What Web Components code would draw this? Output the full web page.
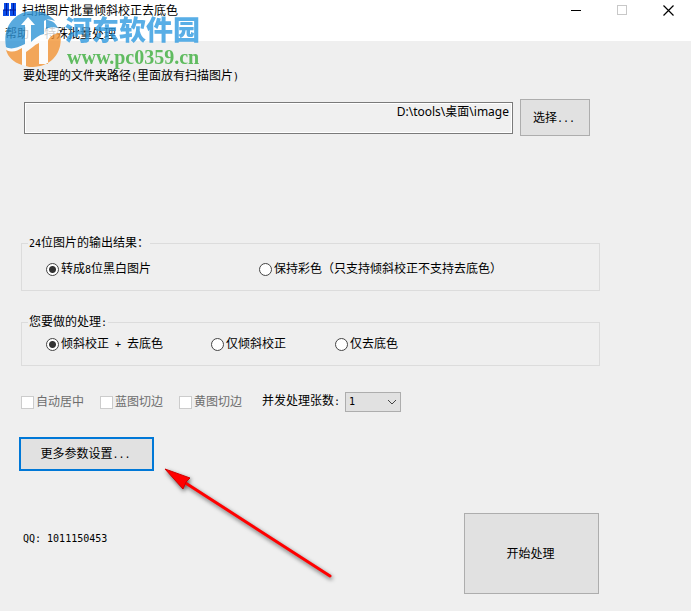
<!DOCTYPE html>
<html lang="zh-CN">
<head>
<meta charset="utf-8">
<title>扫描图片批量倾斜校正去底色</title>
<style>
  body {
    margin: 0;
    min-height: 100vh;
    background: #efefef;
    color: #000;
    font: 12px/16px "Liberation Mono", "Noto Sans CJK SC", monospace;
  }
</style>
</head>
<body>
<scan-app></scan-app>

<script>
class TitleBar extends HTMLElement {
  constructor() {
    super();
    this.attachShadow({ mode: 'open' });
    this.shadowRoot.innerHTML = `
      <style>
        :host {
          display: flex;
          align-items: center;
          height: 20px;
          padding-left: 3px;
          background: #fff;
          font-family: "Noto Sans CJK SC", sans-serif;
        }
        h1 { flex: 1; margin: 0 0 0 6px; font-size: 12px; font-weight: 400; }
        button {
          width: 46px;
          height: 20px;
          padding: 0;
          border: 0;
          background: none;
        }
        button svg { display: block; margin: auto; }
      </style>
      <svg width="13" height="14" viewBox="0 0 13 14">
        <path d="M1 0h5v13H0V7h1zM8 0h5v13H7V6h1z" fill="#0b4de8"/>
        <path d="M3.500 0v12M0 7h13M10.500 0v12" stroke="#001a9e"/>
      </svg>
      <h1><slot></slot></h1>
      <button aria-label="最小化"><svg width="11" height="11"><path d="M0 5.500h10" stroke="#000"/></svg></button>
      <button aria-label="最大化" disabled><svg width="11" height="11"><rect x=".5" y=".5" width="9" height="9" fill="none" stroke="#c8c8c8"/></svg></button>
      <button aria-label="关闭"><svg width="11" height="11"><path d="M.5.5l10 10M10.500.5l-10 10" stroke="#000" stroke-width="1.200"/></svg></button>
    `;
  }
}

class MenuBar extends HTMLElement {
  constructor() {
    super();
    this.attachShadow({ mode: 'open' });
    this.shadowRoot.innerHTML = `
      <style>
        :host {
          display: flex;
          align-items: center;
          gap: 15px;
          height: 21px;
          padding: 0 5px;
          background: #fff;
          font-family: "Noto Sans CJK SC", sans-serif;
        }
        button { padding: 4px 0 0; border: 0; background: none; font: inherit; }
      </style>
      <button>帮助</button>
      <button>特殊批量处理</button>
    `;
  }
}

class PushButton extends HTMLElement {
  constructor() {
    super();
    this.attachShadow({ mode: 'open' });
    this.shadowRoot.innerHTML = `
      <style>
        :host { display: inline-flex; }
        button {
          flex: 1;
          box-sizing: border-box;
          padding: 2px 2px 0 0;
          border: 1px solid #adadad;
          background: #e1e1e1;
          color: inherit;
          font: inherit;
        }
        :host([primary]) button { border: 2px solid #0078d7; }
      </style>
      <button><slot></slot></button>
    `;
  }
}

class GroupBox extends HTMLElement {
  constructor() {
    super();
    this.attachShadow({ mode: 'open' });
    this.shadowRoot.innerHTML = `
      <style>
        :host { display: block; }
        fieldset {
          min-width: 0;
          margin: 0;
          padding: var(--group-padding, 8px) 0 12px 24px;
          border: 1px solid #dcdcdc;
        }
        legend { margin-left: -18px; padding: 2px 1px 0; }
        div { display: flex; align-items: center; }
      </style>
      <fieldset>
        <legend><slot name="label"></slot></legend>
        <div><slot></slot></div>
      </fieldset>
    `;
  }
}

// Radio button or tick box with its label
class CheckItem extends HTMLElement {
  constructor() {
    super();
    this.attachShadow({ mode: 'open' });
    const type = this.getAttribute('type');
    this.shadowRoot.innerHTML = `
      <style>
        :host { display: block; white-space: nowrap; }
        label { display: flex; align-items: center; gap: 2px; }
        input {
          appearance: none;
          flex: none;
          box-sizing: border-box;
          width: 13px;
          height: 13px;
          margin: 0;
          border: 1px solid #444;
          background: #fff;
        }
        input[type=radio] { border-radius: 50%; }
        input[type=radio]:checked { background: radial-gradient(circle, #333 3px, #fff 4px); }
        input:disabled { border-color: #ccc; }
        input:disabled + span { color: #6d6d6d; }
        span { padding-top: 2px; }
      </style>
      <label>
        <input type="${type}" ${this.hasAttribute('checked') ? 'checked' : ''} ${this.hasAttribute('disabled') ? 'disabled' : ''}>
        <span><slot></slot></span>
      </label>
    `;
  }
}

class SiteMark extends HTMLElement {
  constructor() {
    super();
    this.attachShadow({ mode: 'open' });
    this.shadowRoot.innerHTML = `
      <style>
        :host {
          position: absolute;
          left: 5px;
          top: 11px;
          display: flex;
          gap: 4px;
          opacity: .8;
          pointer-events: none;
        }
        .words { display: flex; flex-direction: column; }
        b { white-space: nowrap; }
        .name {
          color: #2f9ae0;
          font: 900 27px/36px "Noto Sans CJK SC", sans-serif;
        }
        .site {
          padding-left: 2px;
          color: #3daf3d;
          font: 700 20px/20px "Liberation Serif", serif;
        }
      </style>
      <svg width="56" height="57" viewBox="0 0 56 57">
        <circle cx="28" cy="28" r="28" fill="#fff"/>
        <path d="M1 36C-3 15 11 0 28 0c9 0 17 4 22 10-4-2-8-2-11 0v13c-5 1-9 4-13 8V14h4l-7-8-7 8h4v19C12 37 6 39 1 36z" fill="#3095d6"/>
        <path d="M55 22c4 18-8 34-27 34-3 0-5 0-7-1V41c5-3 8-7 13-9v21h9V30c0-3 7-9 12-8z" fill="#f39535"/>
        <path d="M1 39c7 3 11 1 16-2v17C8 51 3 46 1 39z" fill="#f39535"/>
        <path d="M41 9c5 0 9 2 12 8-3-1-8-1-12 1z" fill="#3095d6"/>
      </svg>
      <span class="words">
        <b class="name">河东软件园</b>
        <b class="site">www.pc0359.cn</b>
      </span>
    `;
  }
}

class PointerArrow extends HTMLElement {
  constructor() {
    super();
    this.attachShadow({ mode: 'open' });
    this.shadowRoot.innerHTML = `
      <style>
        :host { position: absolute; left: 160px; top: 464px; pointer-events: none; }
        svg { display: block; filter: drop-shadow(1px 2px 2px rgba(0, 0, 0, .6)); }
      </style>
      <svg width="180" height="120" viewBox="0 0 180 120">
        <path d="M24 18L170 112" stroke="#f00" stroke-width="3" stroke-linecap="round"/>
        <path d="M5 5l25 9-4 4-3 7z" fill="#f00" stroke="#d00000"/>
      </svg>
    `;
  }
}

class ScanApp extends HTMLElement {
  constructor() {
    super();
    this.attachShadow({ mode: 'open' });
    this.shadowRoot.innerHTML = `
      <style>
        :host { display: block; position: relative; }
        main { display: flex; flex-direction: column; padding: 28px 91px 18px 21px; }
        small { font: 10px/10px "DejaVu Sans Mono", monospace; }
        .path-label { padding-left: 2px; }
        .path { display: flex; align-items: center; gap: 7px; margin: 14px 10px 0 3px; }
        .path input {
          flex: 1;
          min-width: 0;
          box-sizing: border-box;
          height: 32px;
          padding: 0 3px 14px;
          border: 1px solid #7a7a7a;
          outline: 1px solid #fff;
          outline-offset: -2px;
          background: #f0f0f0;
          font: 12px/16px "Noto Sans", "Noto Sans CJK SC", sans-serif;
          text-align: right;
        }
        .path push-button { width: 70px; height: 37px; }
        .output { margin-top: 98px; }
        .process { --group-padding: 4px; margin-top: 22px; }
        .output check-item:first-of-type { width: 213px; }
        .process check-item:first-of-type { width: 165px; }
        .process check-item:nth-of-type(2) { width: 124px; }
        .options { display: flex; align-items: center; margin-top: 26px; white-space: nowrap; }
        .options check-item { margin-right: 16px; }
        .options label { margin: 0 5px 0 4px; }
        .select { display: flex; position: relative; }
        select {
          appearance: none;
          width: 56px;
          height: 20px;
          padding: 0 3px;
          border: 1px solid #adadad;
          border-radius: 0;
          background: #e1e1e1;
          font: 10px/16px "DejaVu Sans Mono", monospace;
        }
        .select svg { position: absolute; right: 4px; top: 7px; pointer-events: none; }
        .more { align-self: flex-start; width: 135px; height: 34px; margin: 25px 0 0 -2px; }
        .contact { margin: 60px 0 0 2px; font: 10px/16px "DejaVu Sans Mono", monospace; }
        .start { align-self: flex-end; width: 135px; height: 81px; margin: -34px 1px 0 0; }
      </style>
      <title-bar>扫描图片批量倾斜校正去底色</title-bar>
      <menu-bar></menu-bar>
      <main>
        <label class="path-label" for="path">要处理的文件夹路径<small>(</small>里面放有扫描图片<small>)</small></label>
        <div class="path">
          <input id="path" type="text" value="D:\\tools\\桌面\\image">
          <push-button>选择<small>...</small></push-button>
        </div>
        <group-box class="output">
          <span slot="label"><small>24</small>位图片的输出结果：</span>
          <check-item type="radio" checked>转成<small>8</small>位黑白图片</check-item>
          <check-item type="radio">保持彩色（只支持倾斜校正不支持去底色）</check-item>
        </group-box>
        <group-box class="process">
          <span slot="label">您要做的处理<small>:</small></span>
          <check-item type="radio" checked>倾斜校正<small> + </small>去底色</check-item>
          <check-item type="radio">仅倾斜校正</check-item>
          <check-item type="radio">仅去底色</check-item>
        </group-box>
        <div class="options">
          <check-item type="checkbox" disabled>自动居中</check-item>
          <check-item type="checkbox" disabled>蓝图切边</check-item>
          <check-item type="checkbox" disabled>黄图切边</check-item>
          <label for="count">并发处理张数<small>:</small></label>
          <span class="select">
            <select id="count"><option>1</option><option>2</option><option>4</option></select>
            <svg width="10" height="6"><path d="M1 1l4 4 4-4" fill="none" stroke="#444"/></svg>
          </span>
        </div>
        <push-button class="more" primary>更多参数设置<small>...</small></push-button>
        <div class="contact">QQ: 1011150453</div>
        <push-button class="start">开始处理</push-button>
      </main>
      <site-mark></site-mark>
      <pointer-arrow></pointer-arrow>
    `;
  }
}

customElements.define('title-bar', TitleBar);
customElements.define('menu-bar', MenuBar);
customElements.define('push-button', PushButton);
customElements.define('group-box', GroupBox);
customElements.define('check-item', CheckItem);
customElements.define('site-mark', SiteMark);
customElements.define('pointer-arrow', PointerArrow);
customElements.define('scan-app', ScanApp);
</script>
</body>
</html>
